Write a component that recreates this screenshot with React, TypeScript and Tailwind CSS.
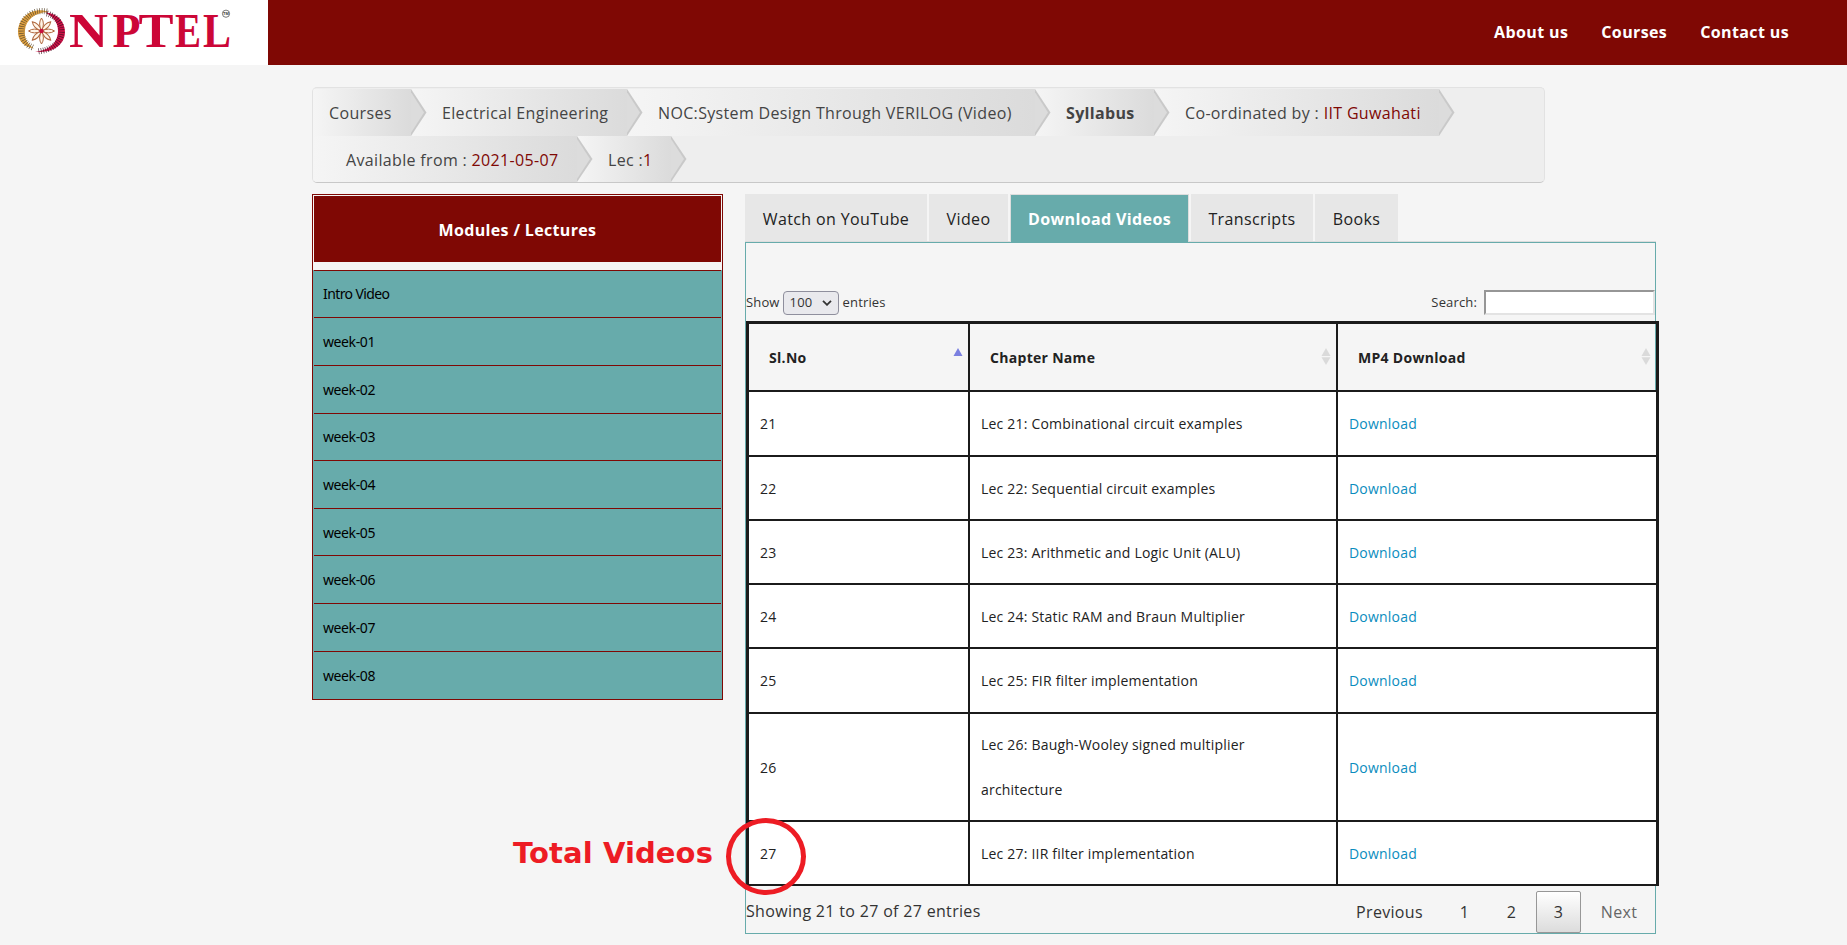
import React from 'react';

type Crumb = { w: string; pl: string; text: string; bold?: boolean; value?: string };

const crumbs1: Crumb[] = [
  { w: 'w-[98px]', pl: 'pl-[16px]', text: 'Courses' },
  { w: 'w-[216px]', pl: 'pl-[31px]', text: 'Electrical Engineering' },
  { w: 'w-[408px]', pl: 'pl-[31px]', text: 'NOC:System Design Through VERILOG (Video)' },
  { w: 'w-[119px]', pl: 'pl-[31px]', text: 'Syllabus', bold: true },
  { w: 'w-[285px]', pl: 'pl-[31px]', text: 'Co-ordinated by : ', value: 'IIT Guwahati' },
];
const crumbs2: Crumb[] = [
  { w: 'w-[264px]', pl: 'pl-[33px]', text: 'Available from : ', value: '2021-05-07' },
  { w: 'w-[94px]', pl: 'pl-[31px]', text: 'Lec :', value: '1' },
];

function CrumbRow({ items, row }: { items: Crumb[]; row: string }) {
  return (
    <div className={`flex ${row}`}>
      {items.map((c, i) => (
        <div
          key={c.text}
          className={`relative flex items-center whitespace-pre bg-gradient-to-r from-[#f5f5f5] to-[#dbdbdb] pt-px ${c.w} ${c.pl}`}
          style={{ zIndex: 10 - i }}
        >
          <span className={c.bold ? 'font-bold' : ''}>{c.text}</span>
          <span className="text-[#7f0804]">{c.value}</span>
          <svg className="absolute left-full top-0 h-full w-[16px]" viewBox="0 0 16 47" preserveAspectRatio="none">
            <path d="M0 0L15.5 23.5L0 47Z" fill="#c9c9c9" />
            <path d="M-2 0L13 23.5L-2 47Z" fill="#dcdcdc" />
          </svg>
        </div>
      ))}
    </div>
  );
}

const letters = [
  { c: 'N', x: 69, w: 39 },
  { c: 'P', x: 112.5, w: 28 },
  { c: 'T', x: 138.5, w: 35 },
  { c: 'E', x: 175, w: 26 },
  { c: 'L', x: 203, w: 28 },
];

function Logo() {
  const petals = [0, 45, 90, 135, 180, 225, 270, 315];
  return (
    <svg width="268" height="65" viewBox="0 0 268 65">
      <path d="M49 12C33 6 18 17 18 32C18 41 24 47 34 48.5C27 44 24 38 25 30C26 20 35 12 49 12Z" fill="#dc9f40" />
      <path d="M45 12.5C57 13 65 21 65 32C65 45 52 54 35 51.5C48 51 58 43 58 31C58 23 54 17 45 12.5Z" fill="#cf1148" />
      <path d="M47 11.5C32 9 21.500 18 21.500 31C21.500 39 26 45 34 48" fill="none" stroke="#57452b" strokeWidth="6" strokeDasharray="0.6 1.7" />
      <path d="M47 13.500C56 16 61.500 23 61.500 31C61.500 43 51 50.500 37 51.500" fill="none" stroke="#3d1420" strokeWidth="6" strokeDasharray="0.6 1.700" />
      {petals.map((a) => (
        <path key={a} d="M41.5 31Q37.7 23.500 41.500 18Q45.300 23.500 41.500 31Z" fill="#fff5e8" stroke="#b0683f" strokeWidth="1" transform={`rotate(${a} 41.5 31)`} />
      ))}
      <circle cx="41.5" cy="31" r="2.2" fill="#c8103c" />
      <text y="47.3" fontFamily="'Liberation Serif', serif" fontWeight="700" fontSize="48" fill="#cc0637">
        {letters.map((l) => (
          <tspan key={l.c} x={l.x} textLength={l.w} lengthAdjust="spacingAndGlyphs">{l.c}</tspan>
        ))}
      </text>
      <circle cx="226" cy="13.7" r="3.6" fill="none" stroke="#555" strokeWidth=".8" />
      <text x="226" y="15.2" fontFamily="'Liberation Sans', sans-serif" fontWeight="700" fontSize="4" textAnchor="middle" fill="#333">TM</text>
    </svg>
  );
}

const modules = ['Intro Video', 'week-01', 'week-02', 'week-03', 'week-04', 'week-05', 'week-06', 'week-07', 'week-08'];

const tabs = [
  { w: 'w-[182px] mr-[2px]', t: 'Watch on YouTube' },
  { w: 'w-[79px] mr-[2px]', t: 'Video' },
  { w: 'w-[179px] mr-[2px]', t: 'Download Videos', on: true },
  { w: 'w-[122px] mr-[2px]', t: 'Transcripts' },
  { w: 'w-[83px]', t: 'Books' },
];

const rows = [
  { n: 21, h: 'h-[65px]', t: 'Lec 21: Combinational circuit examples' },
  { n: 22, h: 'h-[64px]', t: 'Lec 22: Sequential circuit examples' },
  { n: 23, h: 'h-[64px]', t: 'Lec 23: Arithmetic and Logic Unit (ALU)' },
  { n: 24, h: 'h-[64px]', t: 'Lec 24: Static RAM and Braun Multiplier' },
  { n: 25, h: 'h-[65px]', t: 'Lec 25: FIR filter implementation' },
  { n: 26, h: 'h-[108px]', t: 'Lec 26: Baugh-Wooley signed multiplier architecture' },
  { n: 27, h: 'h-[64px]', t: 'Lec 27: IIR filter implementation' },
];

function Sort({ active }: { active?: boolean }) {
  return (
    <svg width="10" height="18" viewBox="0 0 10 18">
      <path d="M5 0L9.5 8H0.5Z" fill={active ? '#7b80e0' : '#dadada'} />
      {!active && <path d="M5 17L9.5 9.3H0.5Z" fill="#dadada" />}
    </svg>
  );
}

export default function App() {
  return (
    <div className="relative h-[945px] w-[1847px] overflow-hidden bg-[#f5f5f5] font-['Open_Sans','Noto_Sans',sans-serif] text-[#222]">
      <header className="flex h-[65px] bg-[#7f0804]">
        <div className="w-[268px] bg-white"><Logo /></div>
        <nav className="ml-auto flex items-center gap-[33px] pb-[2px] pr-[58px] text-[16px] font-bold tracking-[0.38px] text-white">
          <a>About us</a><a>Courses</a><a>Contact us</a>
        </nav>
      </header>

      <div className="ml-[312px] mt-[22px] h-[96px] w-[1233px] overflow-hidden rounded-[5px] border border-[#e2e2e2] border-b-[#c8c8c8] bg-[#eeeeee] pt-px text-[16px] tracking-[0.34px] text-[#444]">
        <CrumbRow items={crumbs1} row="h-[47px]" />
        <CrumbRow items={crumbs2} row="h-[46px]" />
      </div>

      <main className="ml-[312px] mt-[11px] flex items-start gap-[22px]">
        <aside className="h-[506px] w-[411px] border border-[#7f0804] text-[14px] text-black">
          <div className="mx-px mt-px flex h-[66px] items-center justify-center bg-[#7f0804] pt-[2px] text-[16px] font-bold tracking-[0.34px] text-white">Modules / Lectures</div>
          <div className="mt-[7.6px] h-[429.4px] bg-[#67abab] font-['Noto_Sans',sans-serif]">
            {modules.map((m, i) => (
              <div key={m} className={`mx-px flex h-[47.65px] items-center border-t border-[#7f0804] pl-[9px] ${i === 0 ? 'tracking-[-0.6px]' : 'tracking-[-0.4px]'}`}>{m}</div>
            ))}
          </div>
        </aside>

        <section className="w-[914px]">
          <div className="flex h-[48px] w-[911px] border-b border-[#ddd] text-[16px] tracking-[0.38px]">
            {tabs.map((t) => (
              <div key={t.t} className={`flex items-center justify-center whitespace-nowrap ${t.w} ${t.on ? 'mb-[-1px] border border-b-0 border-[#ddd] bg-[#67abab] font-bold text-white' : 'bg-[#e7e7e7] pt-[2px]'}`}>{t.t}</div>
            ))}
          </div>
          <div className="h-[692px] w-[911px] border border-[#67abab]">
            <div className="flex h-[78px] items-end justify-between pb-[6px] text-[13px] tracking-[0.15px] text-[#333]">
              <div className="flex items-center">
                Show
                <div className="ml-[3px] mr-[4px] flex h-[24px] w-[56px] items-center justify-between rounded-[4px] border border-[#8f8f9d] bg-[#e9e9ed] pl-[6px] pr-[6px]">
                  100
                  <svg width="10" height="6" viewBox="0 0 10 6"><path d="M1 .8L5 4.8L9 .8" fill="none" stroke="#333" strokeWidth="1.8" /></svg>
                </div>
                entries
              </div>
              <div className="flex items-center">
                Search:
                <div className="ml-[7px] h-[25px] w-[171px] border-2 border-b-[#e3e3e3] border-l-[#969696] border-r-[#e3e3e3] border-t-[#969696] bg-white" />
              </div>
            </div>
            <div className="w-[913px] border-[3px] border-b-0 border-[#1b1b1b] text-[14px] tracking-[0.2px]">
              <div className="grid h-[68px] grid-cols-[221px_368px_318px] border-b-2 border-[#1b1b1b] font-bold tracking-[0.3px]">
                {['Sl.No', 'Chapter Name', 'MP4 Download'].map((t, i) => (
                  <div key={t} className={`flex items-center justify-between pl-[20px] pr-[5px] ${i < 2 ? 'border-r-2 border-[#1b1b1b]' : ''}`}>{t}<Sort active={i === 0} /></div>
                ))}
              </div>
              {rows.map((r) => (
                <div key={r.n} className={`grid grid-cols-[221px_368px_318px] border-b-2 border-[#1b1b1b] bg-white ${r.h}`}>
                  <div className="flex items-center border-r-2 border-[#1b1b1b] pl-[11px]">{r.n}</div>
                  <div className="flex items-center border-r-2 border-[#1b1b1b] pl-[11px] pr-[70px] leading-[45px]">{r.t}</div>
                  <div className="flex items-center pl-[11px] text-[#0a8cbe]">Download</div>
                </div>
              ))}
            </div>
            <div className="flex items-start justify-between pt-[5px] text-[16px] tracking-[0.32px] text-[#333]">
              <div className="pt-[8px]">Showing 21 to 27 of 27 entries</div>
              <div className="flex h-[42px] items-center">
                <span className="w-[101px] text-center">Previous</span>
                <span className="ml-[2px] w-[45px] text-center">1</span>
                <span className="ml-[2px] w-[45px] text-center">2</span>
                <span className="ml-[2px] flex h-[42px] w-[45px] items-center justify-center rounded-[2px] border border-[#979797] bg-gradient-to-b from-white to-[#dcdcdc]">3</span>
                <span className="ml-[2px] w-[72px] text-center text-[#666]">Next</span>
              </div>
            </div>
          </div>
        </section>
      </main>

      <div className="absolute left-[513px] top-[830px] whitespace-nowrap font-['DejaVu_Sans',sans-serif] text-[29px] font-bold leading-[46px] tracking-[0.1px] text-[#ed1c24]">Total Videos</div>
      <div className="absolute left-[726px] top-[818px] z-20 h-[77px] w-[80px] rounded-[50%] border-[5px] border-[#ed1c24]" />
    </div>
  );
}
